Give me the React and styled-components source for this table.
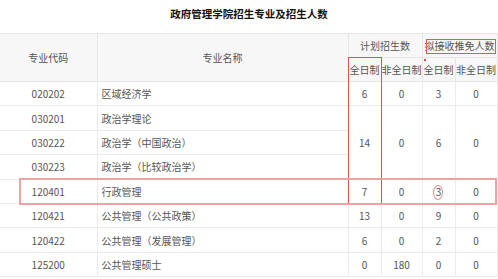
import React from "react";
import styled, {createGlobalStyle} from "styled-components";

const GlobalStyle = createGlobalStyle`
  html, body {
    margin: 0;
    padding: 0;
    background: #fff;
  }
  body {
    font-family: "Noto Sans CJK SC", "Noto Sans", sans-serif;
  }
`

const Page = styled.div`
  width: 498px;
  height: 279px;
  overflow: hidden;
  position: relative;
`

const Title = styled.h1`
  margin: 0;
  height: 33px;
  line-height: 28px;
  font-size: 10.5px;
  font-weight: 700;
  color: #111;
  text-align: center;
`

const Table = styled.table`
  width: 497px;
  border-collapse: collapse;
  table-layout: fixed;
  font-size: 10px;
  color: #555;
`

const Row = styled.tr`
  height: 24.4px;
`

const HeadCell = styled.th`
  background: #f7f7f7;
  font-weight: 400;
  padding: 0;
  border: 1px solid #e6e6e6;
  border-left: ${p => p.$first ? "none" : "1px solid #e6e6e6"};
  white-space: nowrap;
  height: 23px;
`

const Cell = styled.td`
  padding: 0 ${p => p.$left ? "4px" : "0"};
  text-align: ${p => p.$left ? "left" : "center"};
  border: 1px solid #ebebeb;
  border-left: ${p => p.$first ? "none" : "1px solid #ebebeb"};
  white-space: nowrap;
`

const Mark = styled.div`
  position: absolute;
  box-sizing: border-box;
  border: ${p => p.$w || 1}px solid ${p => p.$color};
  border-radius: ${p => p.$round ? "50%" : "0"};
  pointer-events: none;
`

const Dot = styled.div`
  position: absolute;
  left: 424px;
  top: 59px;
  width: 2px;
  height: 2px;
  background: #e04848;
`

const rows = [
  {code: "020202", name: "区域经济学", plan: ["6", "0"], rec: ["3", "0"]},
  {code: "030201", name: "政治学理论", plan: ["14", "0"], rec: ["6", "0"], span: 3},
  {code: "030222", name: "政治学（中国政治）"},
  {code: "030223", name: "政治学（比较政治学）"},
  {code: "120401", name: "行政管理", plan: ["7", "0"], rec: ["3", "0"]},
  {code: "120421", name: "公共管理（公共政策）", plan: ["13", "0"], rec: ["9", "0"]},
  {code: "120422", name: "公共管理（发展管理）", plan: ["6", "0"], rec: ["2", "0"]},
  {code: "125200", name: "公共管理硕士", plan: ["0", "180"], rec: ["0", "0"]},
]

const App = () => {
  return (
    <Page>
      <GlobalStyle/>
      <Title>政府管理学院招生专业及招生人数</Title>
      <Table>
        <colgroup>
          <col style={{width: 97}}/>
          <col style={{width: 251}}/>
          <col style={{width: 33}}/>
          <col style={{width: 41}}/>
          <col style={{width: 33}}/>
          <col style={{width: 42}}/>
        </colgroup>
        <thead>
          <tr>
            <HeadCell $first rowSpan={2}>专业代码</HeadCell>
            <HeadCell rowSpan={2}>专业名称</HeadCell>
            <HeadCell colSpan={2}>计划招生数</HeadCell>
            <HeadCell colSpan={2}>拟接收推免人数</HeadCell>
          </tr>
          <tr>
            <HeadCell>全日制</HeadCell>
            <HeadCell>非全日制</HeadCell>
            <HeadCell>全日制</HeadCell>
            <HeadCell>非全日制</HeadCell>
          </tr>
        </thead>
        <tbody>
          {rows.map(r => (
            <Row key={r.code}>
              <Cell $first>{r.code}</Cell>
              <Cell $left>{r.name}</Cell>
              {r.plan && r.plan.map((v, i) => (
                <Cell key={"p" + i} rowSpan={r.span || 1}>{v}</Cell>
              ))}
              {r.rec && r.rec.map((v, i) => (
                <Cell key={"r" + i} rowSpan={r.span || 1}>{v}</Cell>
              ))}
            </Row>
          ))}
        </tbody>
      </Table>
      <Mark $color="#d9534f" style={{left: 348, top: 57, width: 34, height: 148}}/>
      <Mark $color="#eea3a3" $w={2} style={{left: 19, top: 178, width: 478, height: 27}}/>
      <Mark $color="#e05a5a" style={{left: 426, top: 39, width: 70, height: 15}}/>
      <Mark $color="#ea8c8c" $round style={{left: 433, top: 185, width: 10, height: 15}}/>
      <Dot/>
    </Page>
  )
}

export default App
